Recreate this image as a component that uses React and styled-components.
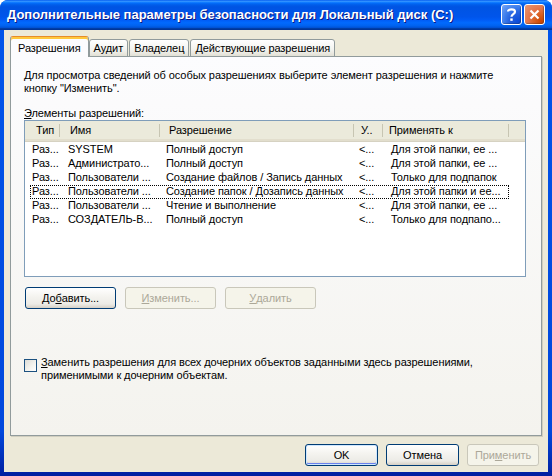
import React from "react";
import styled, { createGlobalStyle } from "styled-components";

const Global = createGlobalStyle`
  html, body { margin: 0; padding: 0; background: #fff; overflow: hidden; }
  * { box-sizing: border-box; }
`;

const Window = styled.div`
  width: 552px;
  height: 476px;
  display: flex;
  flex-direction: column;
  background: #0054e3;
  border-radius: 8px 8px 0 0;
  overflow: hidden;
  font-family: "Liberation Sans", Arial, sans-serif;
  font-size: 11px;
  letter-spacing: -0.08px;
  color: #000;
`;

const TitleBar = styled.div`
  height: 30px;
  flex: none;
  display: flex;
  align-items: center;
  padding: 0 7px 2px 7px;
  background: linear-gradient(
    to bottom,
    #0058ee 0%,
    #3593ff 4%,
    #288eff 6%,
    #127dff 8%,
    #036ffc 10%,
    #0262ee 14%,
    #0057e5 20%,
    #0054e3 24%,
    #0055eb 56%,
    #005bf5 66%,
    #026afe 76%,
    #0062ef 86%,
    #0052d6 92%,
    #0040ab 94%,
    #003092 100%
  );
`;

const Title = styled.div`
  flex: 1;
  color: #fff;
  font-weight: bold;
  font-size: 13px;
  letter-spacing: 0;
  text-shadow: 1px 1px 0 #0a1883;
  white-space: nowrap;
`;

const CaptionButtons = styled.div`
  display: flex;
  gap: 2px;
`;

const CaptionButton = styled.div`
  width: 21px;
  height: 21px;
  border: 1px solid #fff;
  border-radius: 3px;
  display: flex;
  align-items: center;
  justify-content: center;
  background: ${(p) =>
    p.$close
      ? "radial-gradient(circle at 85% 85%, #cc4600 0%, #dc6527 35%, #e37449 55%, #e59977 100%)"
      : "radial-gradient(circle at 85% 85%, #0b4cd9 0%, #2663e0 40%, #3c7ceb 60%, #77a7f7 100%)"};
  box-shadow: inset -1px -1px 1px rgba(0, 0, 0, 0.25);
`;

const Frame = styled.div`
  flex: 1;
  display: flex;
  padding: 0 4px 4px 4px;
  background: linear-gradient(to bottom, #0055ea 0%, #0048dc 90%, #001ea0 100%);
`;

const Client = styled.div`
  flex: 1;
  background: #ece9d8;
  display: flex;
  flex-direction: column;
  padding: 6px 6px 0 6px;
`;

const Tabs = styled.div`
  display: flex;
  align-items: flex-end;
  height: 21px;
  position: relative;
  z-index: 1;
  margin-bottom: -1px;
`;

const Tab = styled.div`
  height: ${(p) => (p.$active ? "21px" : "18px")};
  padding: 0 ${(p) => (p.$active ? "7px" : "4px")};
  margin-right: ${(p) => (p.$active ? "0" : "1px")};
  display: flex;
  align-items: center;
  white-space: nowrap;
  border: 1px solid #919b9c;
  border-bottom: ${(p) => (p.$active ? "none" : "1px solid #919b9c")};
  border-radius: 3px 3px 0 0;
  background: ${(p) =>
    p.$active ? "#fcfcfe" : "linear-gradient(to bottom, #ffffff 0%, #f3f3ef 60%, #e2e0d5 100%)"};
  box-shadow: ${(p) => (p.$active ? "inset 0 2px 0 #ffc83c" : "none")};
  border-top-color: ${(p) => (p.$active ? "#e68b2c" : "#919b9c")};
  padding-top: ${(p) => (p.$active ? "1px" : "0")};
`;

const Panel = styled.div`
  width: 532px;
  height: 380px;
  flex: none;
  border: 1px solid #919b9c;
  box-shadow: 1px 1px 0 #d0cebf;
  background: linear-gradient(to bottom, #fcfcfe 0%, #f4f3ee 100%);
  display: flex;
  flex-direction: column;
  padding: 12px 15px 0 13px;
`;

const Desc = styled.div`
  line-height: 13px;
`;

const Label = styled.div`
  margin-top: 12px;
  line-height: 13px;
`;

const U = styled.span`
  text-decoration: underline;
`;

const List = styled.div`
  width: 502px;
  height: 157px;
  border: 1px solid #7f9db9;
  background: #fff;
  display: flex;
  flex-direction: column;
`;

const cols = "35px 100px 194px 29px 126px 1fr";

const Header = styled.div`
  display: grid;
  grid-template-columns: ${cols};
  height: 21px;
  background: #ebeadb;
  border-bottom: 1px solid #d6d2c2;
  box-shadow: inset 0 -2px 0 #e2decd, inset 0 -1px 0 #cbc7b8;
`;

const HeadCell = styled.div`
  position: relative;
  padding: 0 0 2px ${(p) => p.$pad || 8}px;
  display: flex;
  align-items: center;
  white-space: nowrap;
  overflow: hidden;
  &::after {
    content: "";
    display: ${(p) => (p.$last ? "none" : "block")};
    position: absolute;
    right: 0;
    top: 3px;
    bottom: 4px;
    width: 1px;
    background: #c7c5b2;
    box-shadow: 1px 0 0 #fff;
  }
`;

const Rows = styled.div`
  padding: 1px 0 0 5px;
  display: flex;
  flex-direction: column;
`;

const Row = styled.div`
  display: grid;
  grid-template-columns: 30px 100px 194px 29px 126px;
  height: 14px;
  width: 479px;
  line-height: 13px;
  outline: ${(p) => (p.$focus ? "1px dotted #000" : "none")};
  outline-offset: -1px;
`;

const Cell = styled.div`
  padding-left: ${(p) => p.$pad}px;
  white-space: nowrap;
  overflow: hidden;
`;

const ButtonRow = styled.div`
  display: flex;
  gap: ${(p) => p.$gap}px;
  margin-top: ${(p) => p.$mt || 0}px;
  justify-content: ${(p) => (p.$end ? "flex-end" : "flex-start")};
  padding-left: ${(p) => p.$pl || 0}px;
  padding-right: ${(p) => p.$pr || 0}px;
`;

const Button = styled.div`
  width: ${(p) => p.$w}px;
  height: 22px;
  display: flex;
  align-items: center;
  justify-content: center;
  border: 1px solid ${(p) => (p.$disabled ? "#c9c7ba" : "#003c74")};
  border-radius: 3px;
  color: ${(p) => (p.$disabled ? "#aca899" : "#000")};
  background: ${(p) =>
    p.$disabled
      ? "#f5f4ea"
      : "linear-gradient(to bottom, #ffffff 0%, #f5f4f0 40%, #ecebe6 80%, #d6d0c5 100%)"};
  box-shadow: ${(p) =>
    p.$default ? "inset 0 0 0 1px #cee7ff, inset 0 -1px 0 1px #6982ee" : "none"};
  white-space: nowrap;
`;

const CheckRow = styled.div`
  display: flex;
  align-items: flex-start;
  margin-top: 47px;
`;

const CheckBox = styled.div`
  width: 13px;
  height: 13px;
  flex: none;
  margin-top: 3px;
  border: 1px solid #1c5180;
  background: linear-gradient(135deg, #dcdcd7 0%, #f5f4ef 60%, #ffffff 100%);
`;

const CheckText = styled.div`
  margin-left: 4px;
  line-height: 13px;
`;

const rows = [
  ["Раз...", "SYSTEM", "Полный доступ", "<...", "Для этой папки, ее ..."],
  ["Раз...", "Администрато...", "Полный доступ", "<...", "Для этой папки, ее ..."],
  ["Раз...", "Пользователи ...", "Создание файлов / Запись данных", "<...", "Только для подпапок"],
  ["Раз...", "Пользователи ...", "Создание папок / Дозапись данных", "<...", "Для этой папки и ее..."],
  ["Раз...", "Пользователи ...", "Чтение и выполнение", "<...", "Для этой папки, ее ..."],
  ["Раз...", "СОЗДАТЕЛЬ-В...", "Полный доступ", "<...", "Только для подпапо..."],
];

const cellPads = [2, 8, 6, 5, 8];

export default function App() {
  return (
    <>
      <Global />
      <Window>
        <TitleBar>
          <Title>Дополнительные параметры безопасности для Локальный диск (C:)</Title>
          <CaptionButtons>
            <CaptionButton>
              <svg width="13" height="15" viewBox="0 0 13 15">
                <path
                  d="M3 4.6 C3 1.8 10 1.6 10 4.8 C10 7.2 6.5 7.2 6.5 9.8"
                  fill="none"
                  stroke="#fff"
                  strokeWidth="2.2"
                />
                <rect x="5.3" y="11.4" width="2.4" height="2.4" fill="#fff" />
              </svg>
            </CaptionButton>
            <CaptionButton $close>
              <svg width="11" height="11" viewBox="0 0 11 11">
                <path d="M1.5 1.5 L9.5 9.5 M9.5 1.5 L1.5 9.5" stroke="#fff" strokeWidth="2.2" />
              </svg>
            </CaptionButton>
          </CaptionButtons>
        </TitleBar>
        <Frame>
          <Client>
            <Tabs>
              <Tab $active>Разрешения</Tab>
              <Tab>Аудит</Tab>
              <Tab>Владелец</Tab>
              <Tab>Действующие разрешения</Tab>
            </Tabs>
            <Panel>
              <Desc>
                Для просмотра сведений об особых разрешениях выберите элемент разрешения и нажмите
                <br />
                кнопку "Изменить".
              </Desc>
              <Label>
                <U>Э</U>лементы разрешений:
              </Label>
              <List>
                <Header>
                  <HeadCell $pad={11}>Тип</HeadCell>
                  <HeadCell $pad={10}>Имя</HeadCell>
                  <HeadCell $pad={9}>Разрешение</HeadCell>
                  <HeadCell $pad={7}>У..</HeadCell>
                  <HeadCell $pad={6}>Применять к</HeadCell>
                  <HeadCell $last />
                </Header>
                <Rows>
                  {rows.map((r, i) => (
                    <Row key={i} $focus={i === 3}>
                      {r.map((c, j) => (
                        <Cell key={j} $pad={cellPads[j]}>
                          {c}
                        </Cell>
                      ))}
                    </Row>
                  ))}
                </Rows>
              </List>
              <ButtonRow $gap={9} $mt={10} $pl={1}>
                <Button $w={91}>
                  До<U>б</U>авить...
                </Button>
                <Button $w={91} $disabled>
                  <U>И</U>зменить...
                </Button>
                <Button $w={91} $disabled>
                  <U>У</U>далить
                </Button>
              </ButtonRow>
              <CheckRow>
                <CheckBox />
                <CheckText>
                  <U>З</U>аменить разрешения для всех дочерних объектов заданными здесь разрешениями,
                  <br />
                  применимыми к дочерним объектам.
                </CheckText>
              </CheckRow>
            </Panel>
            <ButtonRow $gap={8} $mt={8} $end $pr={3}>
              <Button $w={73} $default>
                OK
              </Button>
              <Button $w={73}>Отмена</Button>
              <Button $w={72} $disabled>
                При<U>м</U>енить
              </Button>
            </ButtonRow>
          </Client>
        </Frame>
      </Window>
    </>
  );
}
